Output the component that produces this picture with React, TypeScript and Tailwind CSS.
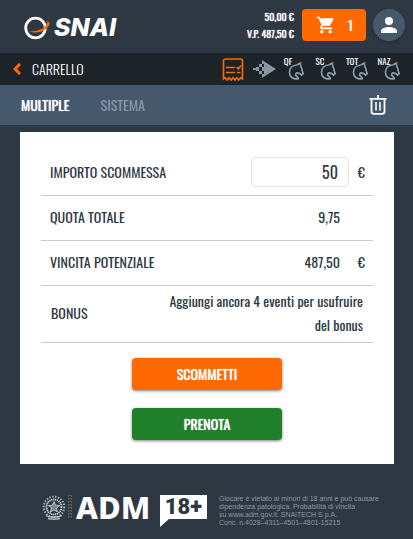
import React from "react";

function SnaiLogo() {
  return (
    <a href="#home" aria-label="SNAI" className="flex items-center gap-0.5 pt-1.5 text-white">
      <svg viewBox="0 0 28 24" className="h-6 w-7" fill="none" aria-hidden="true">
        <circle cx="11.500" cy="12" r="9.800" stroke="#fff" strokeWidth="2.800" />
        <path d="M5 15c7 .8 14-1 17.500-6.500C23.500 7 23.500 6 22 5.500c3-.5 4.500 1.500 3 4-3.500 6-13 9-20 5.500z" fill="#ff6a00" />
      </svg>
      <span className="font-[Inter,sans-serif] text-[25px] leading-none font-extrabold italic">SNAI</span>
    </a>
  );
}

function CartIcon() {
  return (
    <svg viewBox="0 0 24 24" className="size-5" fill="currentColor" aria-hidden="true">
      <path d="M7 18c-1.100 0-2 .9-2 2s.9 2 2 2 2-.9 2-2-.9-2-2-2zM1 2v2h2l3.600 7.590-1.350 2.450C4.520 15.370 5.480 17 7 17h12v-2H7.420c-.14 0-.25-.11-.25-.25l.03-.12.9-1.630h7.450c.75 0 1.410-.41 1.750-1.030l3.580-6.490A1 1 0 0 0 20 4H5.210l-.94-2H1zm16 16c-1.100 0-2 .9-2 2s.9 2 2 2 2-.9 2-2-.9-2-2-2z" />
    </svg>
  );
}

function UserIcon() {
  return (
    <svg viewBox="0 0 24 24" className="size-6" fill="currentColor" aria-hidden="true">
      <path d="M12 12a4 4 0 1 0 0-8 4 4 0 0 0 0 8zm0 2c-2.670 0-8 1.340-8 4v2h16v-2c0-2.660-5.330-4-8-4z" />
    </svg>
  );
}

function TicketIcon() {
  return (
    <svg viewBox="0 0 22 24" className="h-6 w-[22px]" fill="none" stroke="#ff6a00" strokeWidth="1.600" aria-hidden="true">
      <path d="M1.500 22V3.800A1.800 1.800 0 0 1 3.300 2h15.400a1.800 1.800 0 0 1 1.800 1.800V22l-1.900-1.300-1.900 2.300-1.900-2.300-1.900 2.300-1.900-2.300-1.900 2.300-1.900-2.300-1.900 2.300-1.900-2.300z" />
      <path d="M4 10.500h9M4 15.500h9M14.500 10l1.800 1.800L19 8.500M15 15.500h3.500" />
    </svg>
  );
}

function ArrowIcon() {
  return (
    <svg viewBox="0 0 24 18" className="h-[18px] w-6" fill="#8a97a6" aria-hidden="true">
      <path d="M10 0 24 9 10 18v-4h2v-3h-2V7h2V4h-2z" />
      <path d="M7 4h3v3H7zM4 7h3v4H4zM7 11h3v3H7zM1 8h3v2H1zM10 7h2v4h-2z" />
    </svg>
  );
}

function HorseLink({ label }: { label: string }) {
  return (
    <a href={"#" + label.toLowerCase()} className="relative flex h-8 w-6 items-center justify-end">
      <span className="absolute top-0 left-0 w-4 text-center text-[9px] leading-4 text-white">{label}</span>
      <svg viewBox="0 0 16 18" className="mt-1 h-[18px] w-4" fill="none" stroke="#8a97a6" strokeWidth="1.700" strokeLinejoin="round" aria-hidden="true">
        <path d="M10.500 16.600C5 18 1.400 14.500 1.500 10.200 1.600 6.200 4.500 3.200 8.800 3L12.500 1l.2 3.200c1.200 1.500 1.500 3.300 1.600 4.900l1 2.400-1.800 1.500-2-1.700-2.500-.5c-1.700 1-1.800 2.600-.2 3.700 1.200.8 1.700 1.400 1.700 2.100z" />
      </svg>
    </a>
  );
}

function TrashIcon() {
  return (
    <svg viewBox="0 0 18 20" className="h-5 w-[18px]" fill="none" stroke="#fff" strokeWidth="1.800" aria-hidden="true">
      <path d="M.5 3.800h17M9 0v3.500M2.500 4v12.500a2.300 2.300 0 0 0 2.300 2.300h8.400a2.300 2.300 0 0 0 2.300-2.300V4" />
      <path d="M7 7v8.500M11 7v8.500" strokeWidth="1.500" />
    </svg>
  );
}

function Emblem() {
  return (
    <svg viewBox="0 0 24 26" className="h-[26px] w-6" fill="none" stroke="#d0d5da" aria-hidden="true">
      <circle cx="12" cy="12" r="7.500" strokeWidth="1.800" strokeDasharray="1.200 .7" />
      <circle cx="12" cy="12" r="10.300" strokeWidth="2" strokeDasharray="1.400 1.500" opacity=".75" />
      <path d="m12 6.500 1.600 3.700 4 .3-3.100 2.600 1 3.900-3.500-2.100L8.500 17l1-3.900-3.100-2.600 4-.3z" fill="#d0d5da" fillOpacity=".5" strokeWidth=".8" />
      <path d="M4 20.500c3 2 5 1.500 8 1.500s5 .5 8-1.500M6 23.500c4 1 8 1 12 0" strokeWidth="1.500" opacity=".8" />
    </svg>
  );
}

const summary = [
  { label: "QUOTA TOTALE", value: "9,75", unit: "" },
  { label: "VINCITA POTENZIALE", value: "487,50", unit: "€" },
];

export default function App() {
  return (
    <div className="flex min-h-screen flex-col bg-[#2e3843] font-[Oswald,sans-serif] text-sm text-[#2e3843]">
      <header className="flex h-[53px] items-center pr-2 pb-1 pl-6 text-white">
        <SnaiLogo />
        <div className="ml-auto text-right text-[10px] leading-[17px] font-[450] text-shadow-[0_0_1px_#fff]">
          <p>50,00 €</p>
          <p>V.P. 487,50 €</p>
        </div>
        <button type="button" aria-label="Carrello, 1" className="ml-2 flex h-8 w-16 items-center justify-between rounded bg-[#ff6a00] pr-[13px] pl-[14px] font-medium">
          <CartIcon />
          <span>1</span>
        </button>
        <button type="button" aria-label="Profilo" className="ml-[7px] grid size-8 place-items-center rounded-full bg-[#46586c] shadow-md">
          <UserIcon />
        </button>
      </header>

      <nav className="flex h-8 items-center bg-[#1c2329] px-[13px] text-white">
        <a href="#back" className="flex items-center gap-[11px]">
          <svg viewBox="0 0 8 12" className="h-3 w-2" fill="none" stroke="#ff6a00" strokeWidth="3" aria-hidden="true">
            <path d="M7 1 2 6l5 5" />
          </svg>
          <span className="font-light">CARRELLO</span>
        </a>
        <div className="ml-auto flex items-center">
          <a href="#ticket" aria-label="Schedina" className="mr-2"><TicketIcon /></a>
          <a href="#live" aria-label="Live" className="mr-1"><ArrowIcon /></a>
          <div className="flex gap-2">
            <HorseLink label="QF" />
            <HorseLink label="SC" />
            <HorseLink label="TOT" />
            <HorseLink label="NAZ" />
          </div>
        </div>
      </nav>

      <div className="flex h-10 items-center gap-[31px] bg-[#46586c] pr-[26px] pl-[21px]">
        <button type="button" className="font-[450] text-white text-shadow-[0_0_1px_#fff]">MULTIPLE</button>
        <button type="button" className="text-[#8b98a8]">SISTEMA</button>
        <button type="button" aria-label="Svuota carrello" className="ml-auto"><TrashIcon /></button>
      </div>

      <main className="mt-[7px] mr-[19px] ml-5 bg-white px-[21px] pt-[18px] pb-6">
        <div className="flex h-[46px] items-center border-b border-[#cccccc] pr-2 pb-0.5 pl-[9px]">
          <label htmlFor="stake">IMPORTO SCOMMESSA</label>
          <input
            id="stake"
            defaultValue="50"
            inputMode="numeric"
            className="ml-auto h-[30px] w-[98px] rounded border border-[#e2e4e6] px-[10px] text-right text-base"
          />
          <span className="w-4 text-right">€</span>
        </div>
        <dl>
          {summary.map((row) => (
            <div key={row.label} className="flex h-[45px] items-center border-b border-[#cccccc] pr-2 pb-0.5 pl-[9px]">
              <dt>{row.label}</dt>
              <dd className="ml-auto">{row.value}</dd>
              <dd className="w-[25px] text-right">{row.unit}</dd>
            </div>
          ))}
          <div className="flex h-[57px] items-center justify-between border-b border-[#cccccc] px-[10px] pb-0.5">
            <dt>BONUS</dt>
            <dd className="w-[200px] text-right leading-6 font-[450]">Aggiungi ancora 4 eventi per usufruire del bonus</dd>
          </div>
        </dl>
        <div className="mt-[15px] flex flex-col items-center gap-[18px]">
          <button type="button" className="h-8 w-[150px] rounded bg-[#ff6a00] font-[450] text-white shadow-[0_1px_3px_rgba(0,0,0,0.5)] text-shadow-[0_0_1px_#fff]">SCOMMETTI</button>
          <button type="button" className="h-8 w-[150px] rounded bg-[#1f7f2b] font-[450] text-white shadow-[0_1px_3px_rgba(0,0,0,0.5)] text-shadow-[0_0_1px_#fff]">PRENOTA</button>
        </div>
      </main>

      <footer className="flex items-start pt-[31px] pl-[42px]">
        <Emblem />
        <svg viewBox="0 0 4 24" className="ml-0.5 h-6 w-1" fill="none" aria-hidden="true">
          <path d="M.5 0v24" stroke="#2d7a50" strokeDasharray="2 1" />
          <path d="M2 0v24" stroke="#b9bec4" strokeDasharray="1 2" opacity=".5" />
          <path d="M3.500 0v24" stroke="#a8424a" strokeDasharray="2 1" />
        </svg>
        <span className="ml-1 w-[74px] font-['Noto_Sans',sans-serif] text-[31px] leading-6 font-extrabold text-white">ADM</span>
        <div className="relative ml-[10px] grid h-6 w-[47px] place-items-center bg-white font-[Roboto,sans-serif] text-[22px] leading-none font-black text-[#2e3843]">
          18+
          <svg viewBox="0 0 9 8" className="absolute top-full left-0 h-2 w-[9px]" fill="#fff" aria-hidden="true">
            <path d="M0 0h9L0 8z" />
          </svg>
        </div>
        <p className="ml-3 font-['Liberation_Sans',sans-serif] text-[7px] leading-[8px] whitespace-nowrap text-[#8a97a6]">
          Giocare è vietato ai minori di 18 anni e può causare
          <br />
          dipendenza patologica. Probabilità di vincita
          <br />
          su www.adm.gov.it. SNAITECH S.p.A.
          <br />
          Conc. n.4028–4311–4501–4801-15215
        </p>
      </footer>
    </div>
  );
}
